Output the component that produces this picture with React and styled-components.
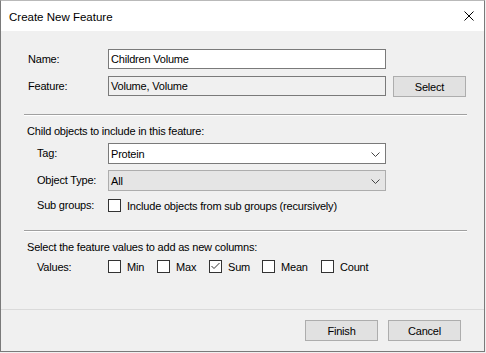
import styled, { createGlobalStyle } from "styled-components";

const GlobalStyle = createGlobalStyle`
  html, body {
    margin: 0;
    padding: 0;
    background: #f0f0f0;
  }
  body {
    font-family: "Liberation Sans", Arial, sans-serif;
  }
`;

const Frame = styled.div`
  width: 485px;
  height: 352px;
  box-sizing: border-box;
  border: 1px solid #7a7a7a;
  border-top-color: #b9b9b9;
  display: flex;
  flex-direction: column;
  background: #f0f0f0;
  font-size: 11px;
  letter-spacing: -0.2px;
  color: #000;
`;

const TitleBar = styled.div`
  height: 30px;
  flex: none;
  background: #fff;
  display: flex;
  align-items: center;
  justify-content: space-between;
  padding: 0 10px 0 8px;
`;

const Title = styled.span`
  font-size: 11.5px;
  letter-spacing: 0;
  line-height: 14px;
  margin-top: 1px;
`;

const CloseIcon = styled.svg`
  display: block;
  margin-bottom: 1px;
`;

const Body = styled.div`
  flex: 1;
  display: flex;
  flex-direction: column;
  padding-top: 18px;
`;

const Row = styled.div`
  display: flex;
  align-items: flex-start;
  height: ${(p) => p.$h}px;
  margin-top: ${(p) => p.$top || 0}px;
`;

const Label = styled.div`
  width: 107px;
  box-sizing: border-box;
  padding-left: ${(p) => p.$indent}px;
  line-height: ${(p) => p.$lh || 20}px;
  flex: none;
`;

const Field = styled.div`
  width: 278px;
  height: 20px;
  box-sizing: border-box;
  border: 1px solid #7a7a7a;
  background: ${(p) => (p.$readOnly ? "#f0f0f0" : "#fff")};
  padding-left: 2px;
  line-height: 18px;
  white-space: nowrap;
`;

const Combo = styled.div`
  width: 278px;
  height: 21px;
  box-sizing: border-box;
  border: 1px solid ${(p) => (p.$disabled ? "#adadad" : "#7a7a7a")};
  background: ${(p) => (p.$disabled ? "#e5e5e5" : "#fff")};
  display: flex;
  align-items: center;
  justify-content: space-between;
  padding: 0 5px 0 2px;
`;

const Chevron = styled.svg`
  display: block;
  margin-top: 1px;
`;

const Button = styled.button`
  width: 73px;
  height: 21px;
  box-sizing: border-box;
  border: 1px solid #adadad;
  background: #e1e1e1;
  font-family: inherit;
  font-size: 11px;
  letter-spacing: -0.2px;
  color: #000;
  padding: 0;
  margin-left: ${(p) => p.$left || 0}px;
`;

const Separator = styled.div`
  margin: ${(p) => p.$top}px 0 0 23px;
  width: 443px;
  height: 1px;
  background: #a0a0a0;
  border-bottom: 1px solid #fff;
  flex: none;
`;

const Heading = styled.div`
  margin-top: 8px;
  padding-left: 26px;
  line-height: 14px;
  height: 14px;
`;

const Check = styled.label`
  display: flex;
  align-items: center;
  width: ${(p) => (p.$w ? `${p.$w}px` : "auto")};
  height: 15px;
  flex: none;
`;

const Box = styled.span`
  width: 13px;
  height: 13px;
  box-sizing: border-box;
  border: 1px solid #333;
  background: #fff;
  margin-right: 6px;
  display: flex;
  align-items: center;
  justify-content: center;
  flex: none;
`;

const Footer = styled.div`
  height: 42px;
  flex: none;
  box-sizing: border-box;
  border-top: 1px solid #dadada;
  display: flex;
  justify-content: flex-end;
  padding: 10px 23px 0 0;
`;

const CheckBox = ({ label, checked, w }) => (
  <Check $w={w}>
    <Box>
      {checked && (
        <svg width="11" height="11" viewBox="0 0 11 11">
          <polyline
            points="1.5,5 4,7.5 9.5,2"
            fill="none"
            stroke="#333"
            strokeWidth="1"
          />
        </svg>
      )}
    </Box>
    {label}
  </Check>
);

const ComboBox = ({ value, disabled }) => (
  <Combo $disabled={disabled}>
    <span>{value}</span>
    <Chevron width="9" height="5" viewBox="0 0 9 5">
      <polyline
        points="0.5,0.5 4.5,4.5 8.5,0.5"
        fill="none"
        stroke="#444"
        strokeWidth="1"
      />
    </Chevron>
  </Combo>
);

const values = [
  { label: "Min", w: 49 },
  { label: "Max", w: 52 },
  { label: "Sum", w: 53, checked: true },
  { label: "Mean", w: 59 },
  { label: "Count" },
];

const App = () => {
  return (
    <>
      <GlobalStyle />
      <Frame>
        <TitleBar>
          <Title>Create New Feature</Title>
          <CloseIcon width="10" height="10" viewBox="0 0 10 10">
            <path d="M0.5 0.5 L9.5 9.5 M9.5 0.5 L0.5 9.5" stroke="#000" strokeWidth="1" />
          </CloseIcon>
        </TitleBar>
        <Body>
          <Row $h={20}>
            <Label $indent={27}>Name:</Label>
            <Field>Children Volume</Field>
          </Row>
          <Row $h={21} $top={7}>
            <Label $indent={27}>Feature:</Label>
            <Field $readOnly>Volume, Volume</Field>
            <Button $left={7}>Select</Button>
          </Row>

          <Separator $top={17} />

          <Heading>Child objects to include in this feature:</Heading>
          <Row $h={21} $top={5}>
            <Label $indent={36} $lh={21}>Tag:</Label>
            <ComboBox value="Protein" />
          </Row>
          <Row $h={21} $top={6}>
            <Label $indent={36} $lh={21}>Object Type:</Label>
            <ComboBox value="All" disabled />
          </Row>
          <Row $h={15} $top={7}>
            <Label $indent={36} $lh={15}>Sub groups:</Label>
            <CheckBox label="Include objects from sub groups (recursively)" />
          </Row>

          <Separator $top={17} />

          <Heading>Select the feature values to add as new columns:</Heading>
          <Row $h={15} $top={5}>
            <Label $indent={36} $lh={16}>Values:</Label>
            {values.map((v) => (
              <CheckBox key={v.label} label={v.label} w={v.w} checked={v.checked} />
            ))}
          </Row>
        </Body>
        <Footer>
          <Button>Finish</Button>
          <Button $left={10}>Cancel</Button>
        </Footer>
      </Frame>
    </>
  );
};

export default App;
